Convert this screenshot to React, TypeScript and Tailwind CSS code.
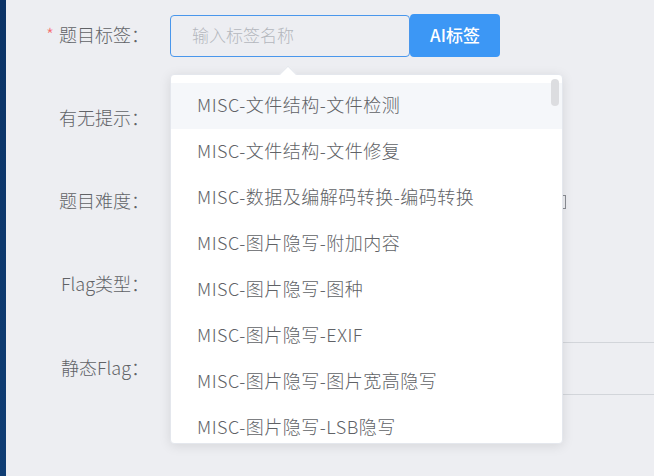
import React from 'react';

const tags = [
  'MISC-文件结构-文件检测',
  'MISC-文件结构-文件修复',
  'MISC-数据及编解码转换-编码转换',
  'MISC-图片隐写-附加内容',
  'MISC-图片隐写-图种',
  'MISC-图片隐写-EXIF',
  'MISC-图片隐写-图片宽高隐写',
  'MISC-图片隐写-LSB隐写',
];

function Label({ text, required }: { text: string; required?: boolean }) {
  return (
    <div className="w-[143px] shrink-0 pb-[3px] text-right text-[18px] font-light text-[#606266]">
      {required && <span className="text-[#f56c6c] mr-[5px]">*</span>}
      {text}
    </div>
  );
}

export default function App() {
  return (
    <div
      className="relative w-[654px] h-[476px] overflow-hidden bg-[#edeef2] flex"
      style={{ fontFamily: '"Noto Sans CJK SC", "Noto Sans", sans-serif' }}
    >
      <div className="w-[6px] shrink-0 bg-gradient-to-b from-[#0b3366] to-[#0f3d74]" />

      <div className="flex-1 flex flex-col pt-[15px] gap-[41px]">
        {/* 题目标签 */}
        <div className="flex items-center h-[42px]">
          <Label text="题目标签：" required />
          <div className="ml-[21px] flex">
            <div className="w-[240px] h-[42px] border border-[#4a97ec] rounded-[4px] flex items-center pl-[21px] pb-[2px] text-[17px] font-light text-[#b4b7bd]">
              输入标签名称
            </div>
            <button className="w-[90px] h-[43px] -mt-[1px] pb-[2px] rounded-[4px] bg-[#3c97f5] text-white text-[17px] font-medium">
              AI标签
            </button>
          </div>
        </div>

        {/* 有无提示 */}
        <div className="flex items-center h-[42px]">
          <Label text="有无提示：" />
        </div>

        {/* 题目难度 */}
        <div className="flex items-center h-[42px]">
          <Label text="题目难度：" />
          <div className="ml-[414px] w-[3px] h-[14px] border-y border-r border-[#8a8d93]" />
        </div>

        {/* Flag类型 */}
        <div className="flex items-center h-[42px]">
          <Label text="Flag类型：" />
        </div>

        {/* 静态Flag */}
        <div className="flex items-center h-[53px] -mt-[5px]">
          <Label text="静态Flag：" />
          <div className="ml-[21px] flex-1 h-[53px] border-y border-[#d2d5da]" />
        </div>
      </div>

      {/* dropdown */}
      <div className="absolute left-[282px] top-[68px] w-[12px] h-[12px] rotate-45 bg-white border-l border-t border-[#e4e7ed] z-20" />
      <div className="absolute left-[170px] top-[74px] w-[393px] h-[370px] bg-white border border-[#e4e7ed] rounded-[4px] shadow-[0_2px_12px_rgba(0,0,0,0.1)] overflow-hidden z-10">
        <div className="py-[8px]">
          {tags.map((t, i) => (
            <div
              key={t}
              className={`h-[46px] flex items-center pl-[26px] pb-[4px] text-[18px] font-light tracking-[0.5px] text-[#606266] ${i === 0 ? 'bg-[#f5f7fa]' : ''}`}
            >
              {t}
            </div>
          ))}
        </div>
        <div className="absolute right-[3px] top-[4px] w-[8px] h-[27px] rounded-full bg-[#dcdde0]" />
      </div>
    </div>
  );
}
